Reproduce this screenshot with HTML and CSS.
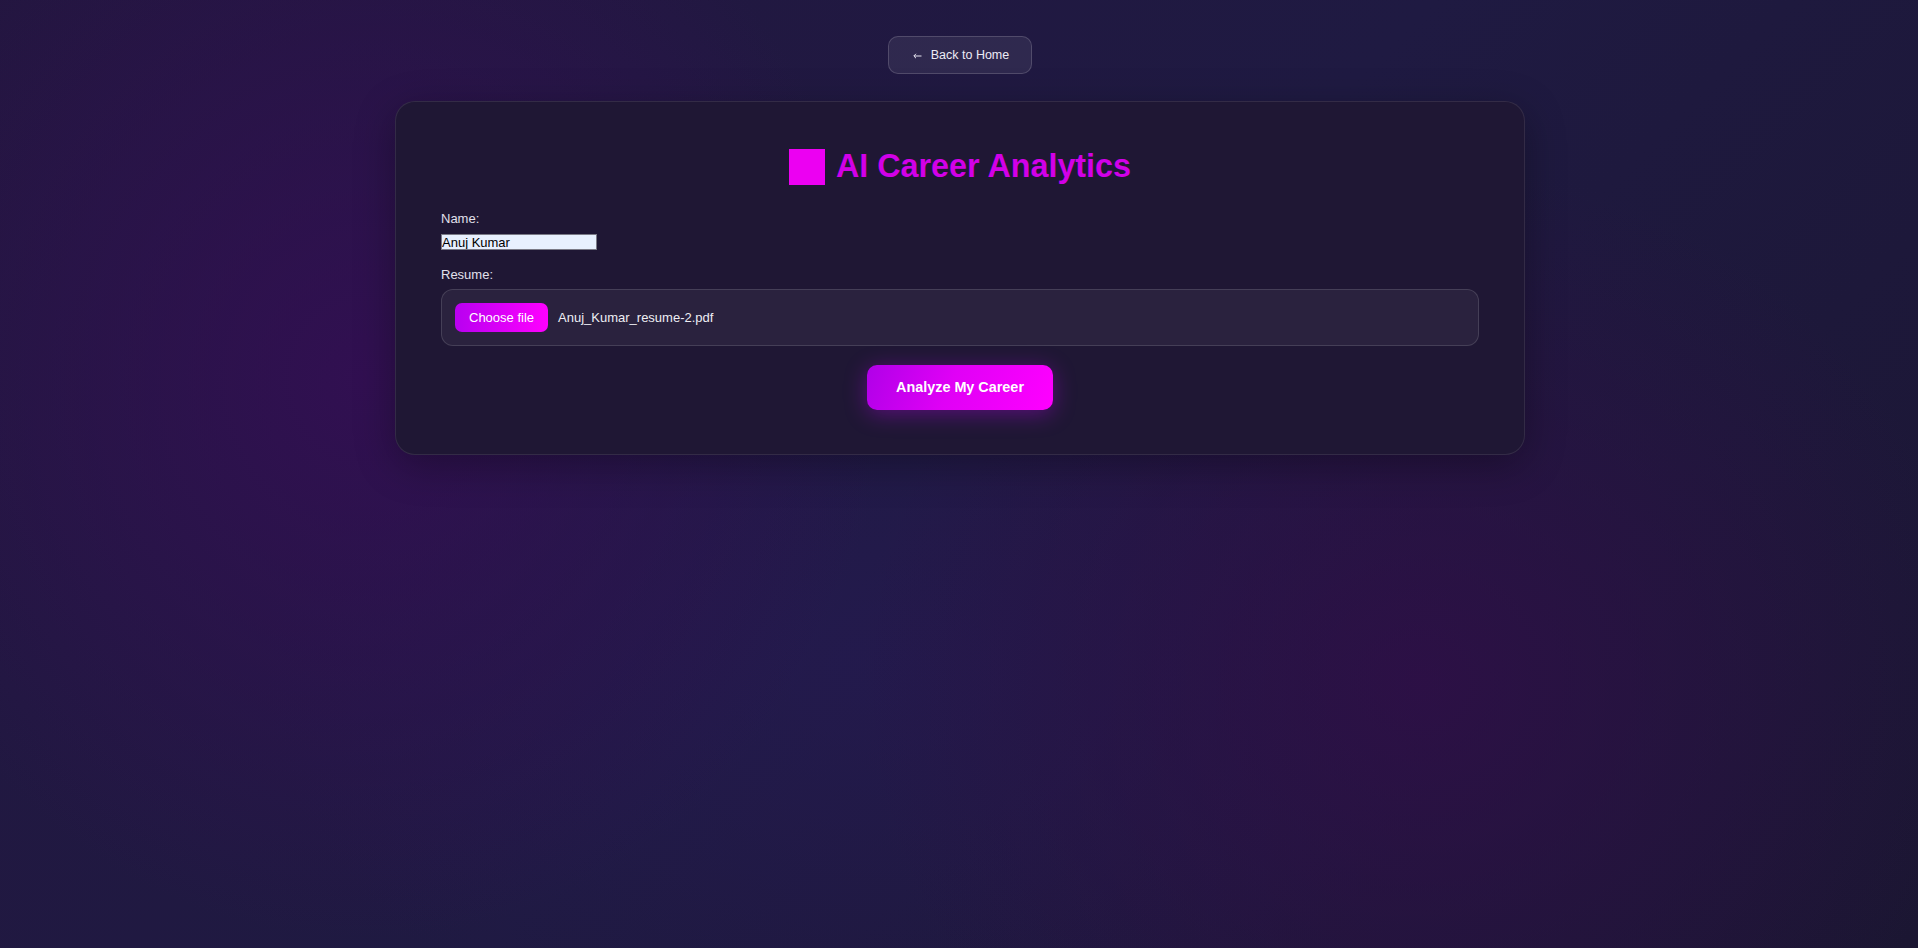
FILE: index.html
```html
<!DOCTYPE html>
<html lang="en">
<head>
<meta charset="utf-8">
<title>AI Career Analytics</title>
<link rel="stylesheet" href="styles.css">
</head>
<body>
  <a class="back-btn" href="#">
    <svg class="back-arrow" width="9" height="6" viewBox="0 0 9 6"><path d="M8.5 3H1M3 0.8L0.8 3L3 5.2" fill="none" stroke="#e8e6f2" stroke-width="1"/></svg>
    <span>Back to Home</span>
  </a>
  <main class="card">
    <h1 class="title"><span class="title-icon"></span><span class="title-text">AI Career Analytics</span></h1>
    <form class="form">
      <label class="field-label" for="name">Name:</label>
      <input class="name-input" id="name" type="text" value="Anuj Kumar">
      <label class="field-label field-label--file">Resume:</label>
      <div class="file-box">
        <span class="file-btn">Choose file</span>
        <span class="file-name">Anuj_Kumar_resume-2.pdf</span>
      </div>
      <div class="submit-row">
        <button class="submit-btn" type="button">Analyze My Career</button>
      </div>
    </form>
  </main>
</body>
</html>
```
FILE: styles.css
```css
html, body {
  margin: 0;
  min-height: 100%;
}
body {
  min-height: 948px;
  box-sizing: border-box;
  padding-top: 36px;
  padding-left: 2px;
  font-family: "Liberation Sans", Arial, sans-serif;
  display: flex;
  flex-direction: column;
  align-items: center;
  background-color: #1f1a40;
  background-image:
    radial-gradient(ellipse 520px 560px at 19% 40%, rgba(52, 14, 84, 0.85), rgba(52, 14, 84, 0) 100%),
    radial-gradient(ellipse 560px 520px at 74% 72%, rgba(48, 14, 72, 0.8), rgba(48, 14, 72, 0) 100%),
    radial-gradient(ellipse 600px 420px at 45% 70%, rgba(38, 26, 84, 0.6), rgba(38, 26, 84, 0) 100%),
    linear-gradient(135deg, #231640 0%, #1f1a42 50%, #1b1632 100%);
}
.back-btn {
  display: flex;
  align-items: center;
  gap: 9px;
  padding: 11px 22px 11px 24px;
  line-height: 14px;
  font-size: 12.5px;
  color: #ecebf5;
  text-decoration: none;
  background: rgba(255, 255, 255, 0.07);
  border: 1px solid rgba(255, 255, 255, 0.16);
  border-radius: 10px;
}
.back-arrow {
  display: block;
  margin-top: 2px;
}
.card {
  width: 1130px;
  box-sizing: border-box;
  margin-top: 27px;
  padding: 46px 45px 44px;
  background: #1f1734;
  border: 1px solid rgba(255, 255, 255, 0.09);
  border-radius: 20px;
  box-shadow: 0 10px 40px rgba(0, 0, 0, 0.3);
}
.title {
  margin: 0 0 26px;
  display: flex;
  justify-content: center;
  align-items: center;
  gap: 11px;
  font-size: 32.3px;
  line-height: 37px;
  font-weight: bold;
}
.title-icon {
  width: 36px;
  height: 36px;
  background: #ec00f2;
}
.title-text {
  color: #d200e8;
}
.form {
  display: flex;
  flex-direction: column;
  align-items: flex-start;
}
.field-label {
  display: block;
  font-size: 13px;
  line-height: 15px;
  color: #e2e0ec;
  margin-bottom: 8px;
}
.field-label--file {
  margin-bottom: 7px;
}
.name-input {
  width: 156px;
  margin: 0 0 17px;
  padding: 0;
  border: 1px solid #7a7a86;
  background: #e8f0fe;
  color: #000;
  font-family: "Liberation Sans", Arial, sans-serif;
  font-size: 13px;
  line-height: 14px;
  height: 16px;
  box-sizing: border-box;
  outline: none;
}
.file-box {
  align-self: stretch;
  display: flex;
  align-items: center;
  padding: 13px;
  background: rgba(255, 255, 255, 0.05);
  border: 1px solid rgba(255, 255, 255, 0.13);
  border-radius: 12px;
}
.file-btn {
  padding: 8px 14px 7px;
  line-height: 14px;
  font-size: 13px;
  color: #fff;
  border-radius: 7px;
  background: linear-gradient(90deg, #b800f0, #ff00ff);
}
.file-name {
  margin-left: 10px;
  font-size: 13px;
  color: #eeeef4;
}
.submit-row {
  align-self: stretch;
  display: flex;
  justify-content: center;
  margin-top: 19px;
}
.submit-btn {
  padding: 14px 29px;
  line-height: 17px;
  font-family: "Liberation Sans", Arial, sans-serif;
  font-size: 14.4px;
  font-weight: bold;
  color: #fff;
  border: none;
  border-radius: 10px;
  background: linear-gradient(110deg, #b000e8 0%, #e000f6 45%, #ff00ff 100%);
  box-shadow: 0 4px 22px rgba(200, 0, 255, 0.35);
  cursor: pointer;
}
```
